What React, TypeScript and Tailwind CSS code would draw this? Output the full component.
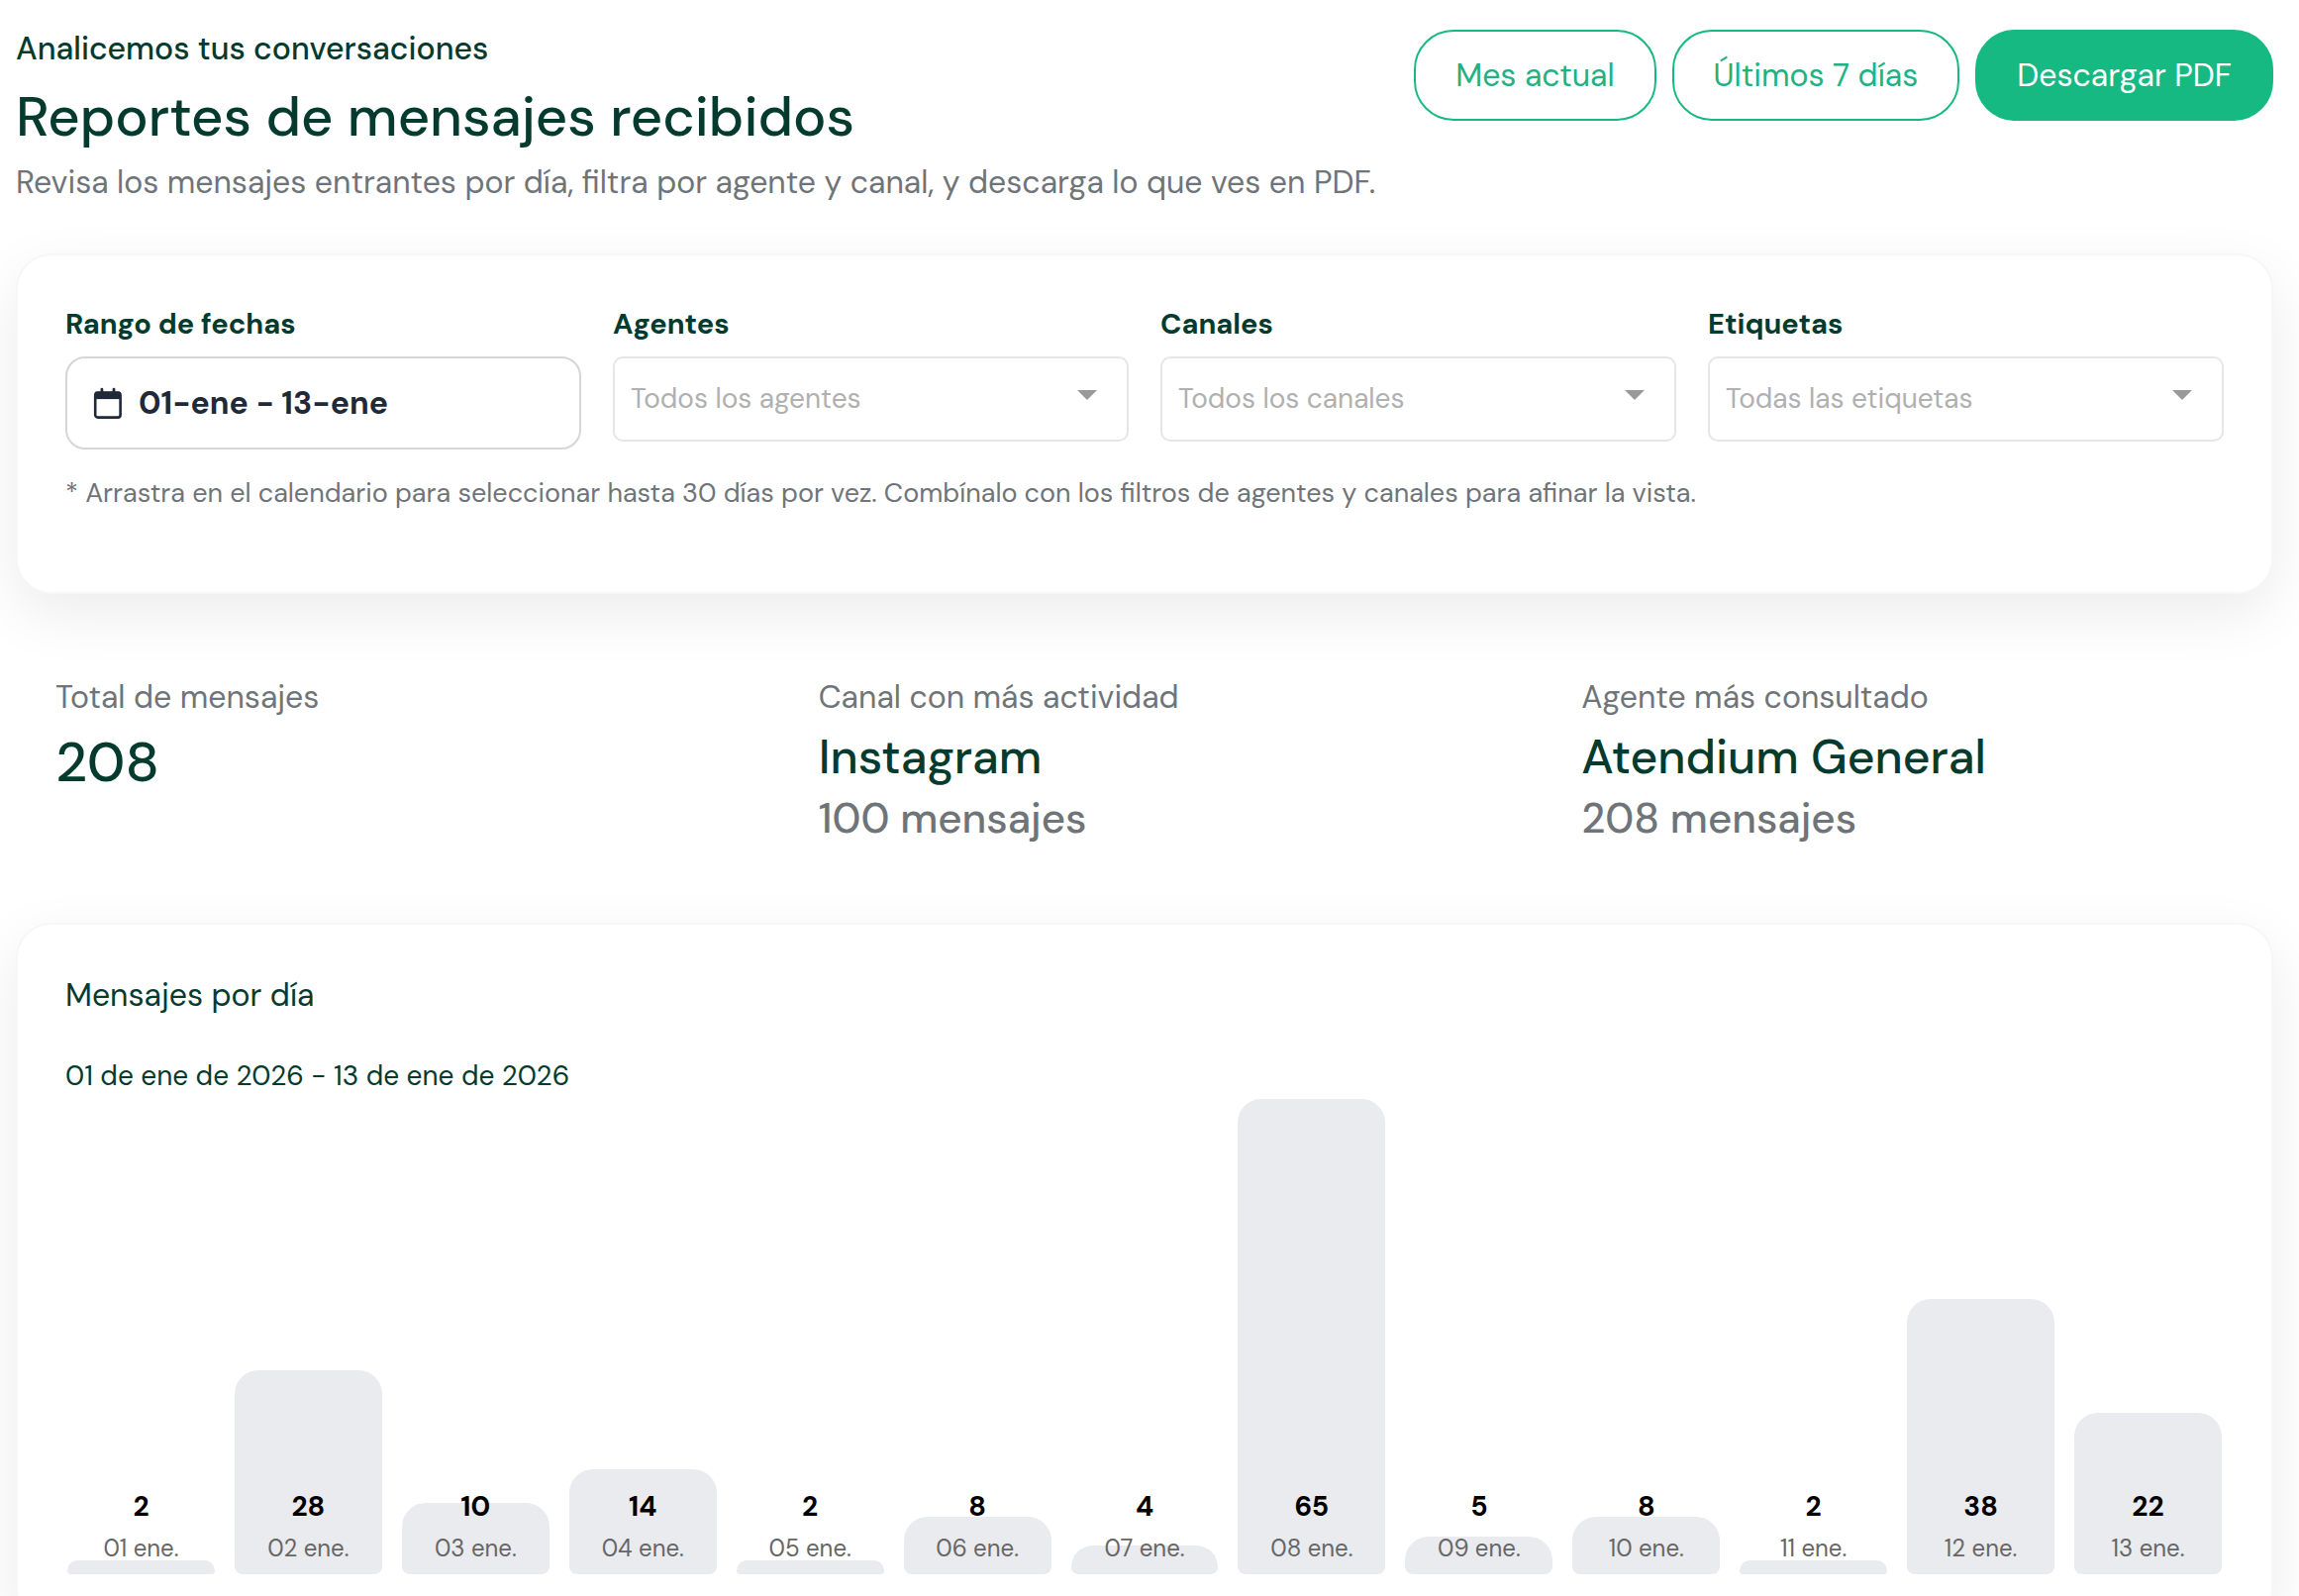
import { useId } from 'react';
import type { ButtonHTMLAttributes, ReactNode } from 'react';
import clsx from 'clsx';

type Day = {
	label: string;
	total: number;
};

const days: Day[] = [
	{ label: '01 ene.', total: 2 },
	{ label: '02 ene.', total: 28 },
	{ label: '03 ene.', total: 10 },
	{ label: '04 ene.', total: 14 },
	{ label: '05 ene.', total: 2 },
	{ label: '06 ene.', total: 8 },
	{ label: '07 ene.', total: 4 },
	{ label: '08 ene.', total: 65 },
	{ label: '09 ene.', total: 5 },
	{ label: '10 ene.', total: 8 },
	{ label: '11 ene.', total: 2 },
	{ label: '12 ene.', total: 38 },
	{ label: '13 ene.', total: 22 },
];

const maxTotal = Math.max(...days.map((day) => day.total));

const App = () => {
	return (
		<main className="h-screen overflow-hidden bg-white pt-[30px] pr-[26px] pl-4 font-['DM_Sans','Inter',sans-serif] text-[#053b2f]">
			<header className="flex items-start justify-between">
				<div>
					<p className="text-[32px] leading-[38px] font-medium">
						Analicemos tus conversaciones
					</p>
					<h1 className="mt-4 text-[56px] leading-[68px] font-medium">
						Reportes de mensajes recibidos
					</h1>
					<p className="mt-3 text-[32px] leading-10 text-[#6f7478]">
						Revisa los mensajes entrantes por día, filtra por agente y canal, y
						descarga lo que ves en PDF.
					</p>
				</div>
				<div className="flex gap-4">
					<PillButton>Mes actual</PillButton>
					<PillButton>Últimos 7 días</PillButton>
					<PillButton filled>Descargar PDF</PillButton>
				</div>
			</header>

			<Card className="mt-[52px] pb-20">
				<div className="grid grid-cols-4 items-start gap-8">
					<DateField />
					<SelectField label="Agentes" placeholder="Todos los agentes" />
					<SelectField label="Canales" placeholder="Todos los canales" />
					<SelectField label="Etiquetas" placeholder="Todas las etiquetas" />
				</div>
				<p className="mt-6 text-[27px] leading-10 text-[#6f7478]">
					* Arrastra en el calendario para seleccionar hasta 30 días por vez.
					Combínalo con los filtros de agentes y canales para afinar la vista.
				</p>
			</Card>

			<section className="mt-[43px] mb-10 grid grid-cols-3 gap-8">
				<Stat label="Total de mensajes">
					<p className="text-[56px] leading-[70px] font-medium">208</p>
				</Stat>
				<Stat label="Canal con más actividad" detail="100 mensajes">
					<p className="text-5xl leading-[60px] font-medium">Instagram</p>
				</Stat>
				<Stat label="Agente más consultado" detail="208 mensajes">
					<p className="text-5xl leading-[60px] font-medium">
						Atendium General
					</p>
				</Stat>
			</section>

			<Card className="pb-12">
				<h2 className="text-[32px] leading-[46px]">Mensajes por día</h2>
				<p className="mt-9 text-[28px] leading-[46px]">
					01 de ene de 2026 - 13 de ene de 2026
				</p>
				<div className="flex gap-5 px-0.5">
					{days.map((day) => (
						<Bar key={day.label} {...day} />
					))}
				</div>
			</Card>
		</main>
	);
};

export default App;

type CardProps = {
	className?: string;
	children: ReactNode;
};

const Card = ({ className, children }: CardProps) => {
	return (
		<section
			className={clsx(
				'rounded-[36px] border-2 border-black/3 bg-white px-12 pt-12 shadow-[0_20px_60px_rgba(0,0,0,0.08)]',
				className
			)}
		>
			{children}
		</section>
	);
};

type PillButtonProps = {
	filled?: boolean;
} & ButtonHTMLAttributes<HTMLButtonElement>;

const PillButton = ({ filled, ...buttonProps }: PillButtonProps) => {
	return (
		<button
			type="button"
			className={clsx(
				'cursor-pointer rounded-[40px] border-2 border-[#16b981] px-10 py-6 text-[32px] leading-10 whitespace-nowrap',
				filled ? 'bg-[#16b981] text-white' : 'bg-white text-[#22b183]'
			)}
			{...buttonProps}
		/>
	);
};

const DateField = () => {
	const id = useId();
	return (
		<div className="flex flex-col gap-3">
			<label htmlFor={id} className="text-[29px] leading-[42px] font-bold">
				Rango de fechas
			</label>
			<button
				id={id}
				type="button"
				className="flex cursor-pointer items-center gap-3 rounded-[20px] border-2 border-[#d6d6d6] px-6 py-6 text-[32px] leading-[42px] font-bold text-[#1f2937]"
			>
				<CalendarIcon />
				01-ene - 13-ene
			</button>
		</div>
	);
};

type SelectFieldProps = {
	label: string;
	placeholder: string;
};

const SelectField = ({ label, placeholder }: SelectFieldProps) => {
	const id = useId();
	return (
		<div className="flex flex-col gap-3">
			<label htmlFor={id} className="text-[29px] leading-[42px] font-bold">
				{label}
			</label>
			<div className="relative">
				<select
					id={id}
					className="w-full appearance-none rounded-[10px] border-2 border-[#e6e6e6] bg-white py-[22px] pr-16 pl-4 text-[28px] leading-[38px] text-[#b0b0b0]"
				>
					<option>{placeholder}</option>
				</select>
				<svg
					viewBox="0 0 20 10"
					className="pointer-events-none absolute top-[34px] right-8 h-2.5 w-5 fill-[#999999]"
				>
					<path d="M0 0h20L10 10z" />
				</svg>
			</div>
		</div>
	);
};

type StatProps = {
	label: string;
	detail?: string;
	children: ReactNode;
};

const Stat = ({ label, detail, children }: StatProps) => {
	return (
		<div className="flex flex-col p-10">
			<p className="mb-2.5 text-[32px] leading-[42px] text-[#6f7478]">
				{label}
			</p>
			{children}
			{detail && (
				<p className="mt-[7px] text-[42px] leading-[50px] font-medium text-[#6f7478]">
					{detail}
				</p>
			)}
		</div>
	);
};

// Value and label sit in the same grid cell, over the bar
const Bar = ({ label, total }: Day) => {
	const height = Math.round((total / maxTotal) * 100);
	return (
		<div className="grid h-[480px] flex-1 items-end text-center">
			<div
				className="col-start-1 row-start-1 rounded-t-3xl rounded-b-lg bg-[#eaebee]"
				style={{ height: `${height}%` }}
			/>
			<div className="z-10 col-start-1 row-start-1 pb-2">
				<p className="text-[28px] leading-[42px] font-bold text-black">
					{total}
				</p>
				<p className="mt-[3px] text-2xl leading-9 text-[#666666]">{label}</p>
			</div>
		</div>
	);
};

const CalendarIcon = () => {
	return (
		<svg viewBox="0 0 36 36" fill="none" className="size-9 stroke-current">
			<rect x="4.2" y="7.6" width="25.4" height="25" rx="2.6" strokeWidth="2.6" />
			<path d="M4.5 10.4h24.8" strokeWidth="7.4" />
			<path d="M10.9 4.2v4M23 4.2v4" strokeWidth="2.8" strokeLinecap="round" />
		</svg>
	);
};
